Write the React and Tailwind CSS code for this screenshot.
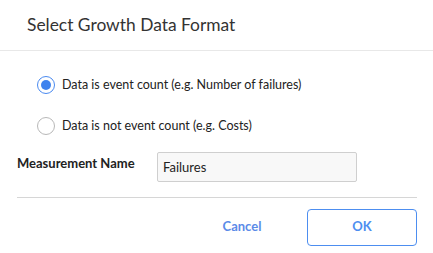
import React, { useState } from "react";

const Radio = ({ checked, label, onClick }) => (
  <label className="flex items-center gap-[7px] cursor-pointer" onClick={onClick}>
    {checked ? (
      <span className="w-[18px] h-[18px] rounded-full border border-[#4a8af0] flex items-center justify-center">
        <span className="w-[10px] h-[10px] rounded-full bg-[#3f83ee]"></span>
      </span>
    ) : (
      <span className="w-[18px] h-[18px] rounded-full border border-[#b8b8b8] bg-white"></span>
    )}
    <span className="text-[12.5px] text-[#222]">{label}</span>
  </label>
);

const App = () => {
  const [eventCount, setEventCount] = useState(true);

  return (
    <div className="w-[433px] h-[253px] bg-white font-['Lato',sans-serif] text-[#333]">
      <div className="h-[51px] border-b border-[#e8e8e8] pl-[27px] flex items-center">
        <h1 className="text-[17.4px] text-[#333] font-normal">Select Growth Data Format</h1>
      </div>

      <div className="pl-[17px] pr-[16px]">
        <div className="pl-[20px] pt-[25px] flex flex-col gap-[22px]">
          <Radio
            checked={eventCount}
            label="Data is event count (e.g. Number of failures)"
            onClick={() => setEventCount(true)}
          />
          <Radio
            checked={!eventCount}
            label="Data is not event count (e.g. Costs)"
            onClick={() => setEventCount(false)}
          />
        </div>

        <div className="flex items-start mt-[16px]">
          <div className="w-[140px] pt-[2px] text-[13px] font-bold text-[#222]">Measurement Name</div>
          <input
            defaultValue="Failures"
            className="w-[200px] h-[30px] border border-[#cfcfcf] rounded-[2px] bg-[#f8f8f8] px-[5px] text-[13px] text-[#222] outline-none"
          />
        </div>

        <div className="border-t border-[#d6d6d6] mt-[15px] pt-[11px] flex justify-end items-center">
          <button className="w-[86px] h-[37px] text-[13px] font-bold text-[#5b8be8] mr-[22px]">Cancel</button>
          <button className="w-[110px] h-[37px] border border-[#4d8ef0] rounded-[4px] text-[13px] font-bold text-[#4d8ef0]">
            OK
          </button>
        </div>
      </div>
    </div>
  );
};

export default App;
